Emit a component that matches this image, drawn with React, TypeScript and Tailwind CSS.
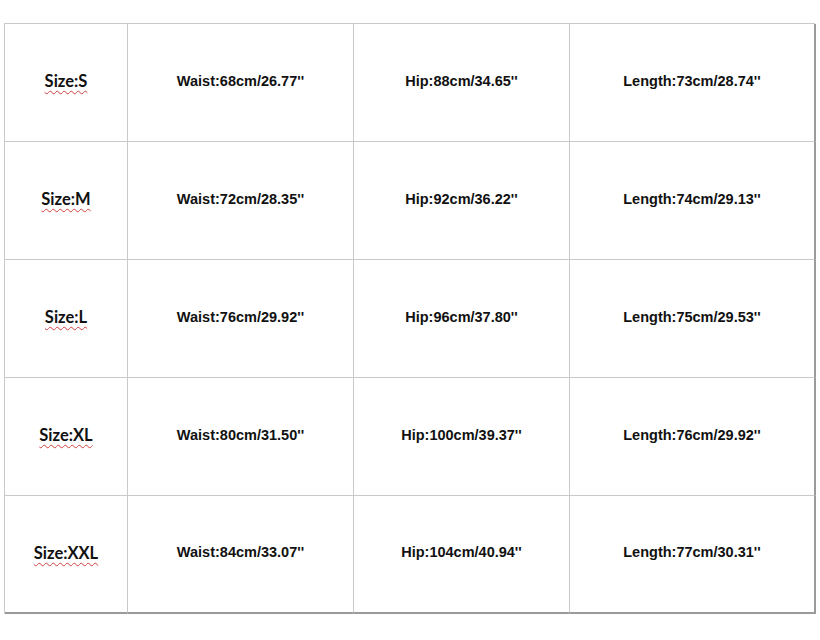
import React from 'react';

interface SizeRow {
  size: string;
  waist: string;
  hip: string;
  length: string;
}

const rows: SizeRow[] = [
  { size: 'Size:S', waist: "Waist:68cm/26.77''", hip: "Hip:88cm/34.65''", length: "Length:73cm/28.74''" },
  { size: 'Size:M', waist: "Waist:72cm/28.35''", hip: "Hip:92cm/36.22''", length: "Length:74cm/29.13''" },
  { size: 'Size:L', waist: "Waist:76cm/29.92''", hip: "Hip:96cm/37.80''", length: "Length:75cm/29.53''" },
  { size: 'Size:XL', waist: "Waist:80cm/31.50''", hip: "Hip:100cm/39.37''", length: "Length:76cm/29.92''" },
  { size: 'Size:XXL', waist: "Waist:84cm/33.07''", hip: "Hip:104cm/40.94''", length: "Length:77cm/30.31''" },
];

const App: React.FC = () => {
  return (
    <div className="w-[820px] h-[640px] bg-white pt-[23px] pl-[4px]">
      <div className="grid w-[811px] grid-cols-[123px_226px_216px_246px] border-l border-t border-[#c9c9c9]">
        {rows.map((row, i) => {
          const last = i === rows.length - 1;
          const bottom = last ? 'border-b-2 border-b-[#9a9a9a]' : 'border-b border-b-[#c9c9c9]';
          return (
            <React.Fragment key={row.size}>
              <div className={`h-[118px] pb-[2px] flex items-center justify-center border-r border-r-[#c9c9c9] ${bottom}`}>
                <span className="font-['Lato','Open_Sans',sans-serif] font-bold text-[16.5px] text-[#111] underline decoration-wavy decoration-[#d24040] decoration-1 underline-offset-[3px]">
                  {row.size}
                </span>
              </div>
              <div className={`h-[118px] pb-[2px] flex items-center justify-center border-r border-r-[#c9c9c9] ${bottom}`}>
                <span className="font-['Liberation_Sans',Arial,sans-serif] font-bold text-[14.5px] text-[#111]">{row.waist}</span>
              </div>
              <div className={`h-[118px] pb-[2px] flex items-center justify-center border-r border-r-[#c9c9c9] ${bottom}`}>
                <span className="font-['Liberation_Sans',Arial,sans-serif] font-bold text-[14.5px] text-[#111]">{row.hip}</span>
              </div>
              <div className={`h-[118px] pb-[2px] flex items-center justify-center border-r-2 border-r-[#9a9a9a] ${bottom}`}>
                <span className="font-['Liberation_Sans',Arial,sans-serif] font-bold text-[14.5px] text-[#111]">{row.length}</span>
              </div>
            </React.Fragment>
          );
        })}
      </div>
    </div>
  );
};

export default App;
